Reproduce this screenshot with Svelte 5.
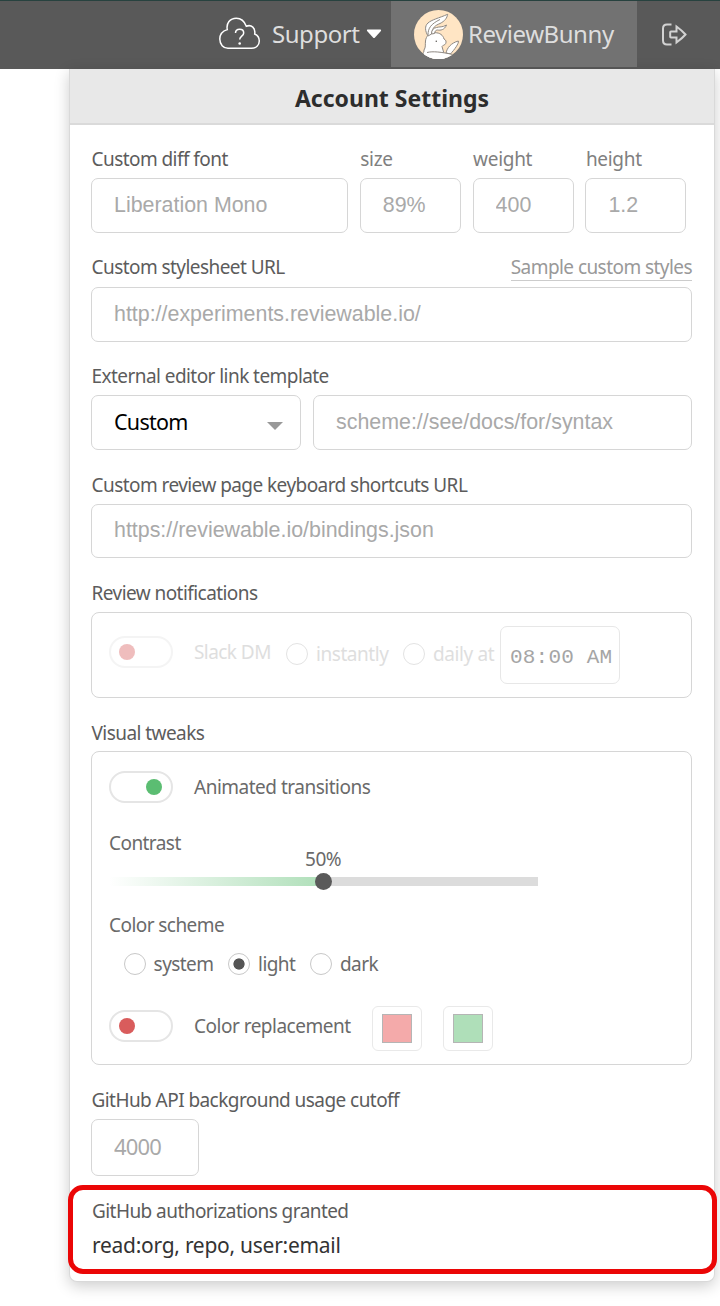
<script>
  let scheme = "light";
  let contrast = 50;
  const diffFields = [
    { name: "size", value: "89%" },
    { name: "weight", value: "400" },
    { name: "height", value: "1.2" },
  ];
  const schemes = ["system", "light", "dark"];
</script>

<div class="page">
  <header>
    <div class="support">
      <svg class="cloud" width="44" height="36" viewBox="0 0 44 36">
        <path
          d="M10 32.300h23.500c4.500 0 7.800-3 7.800-7.300 0-3.400-1.700-5.800-4.600-7 1-6-3.200-9.800-8.400-7.800C26.500 5.400 22.700 2.200 18.300 2.200c-6.300 0-10.300 5-9 11.400C4.500 15 1.800 18.600 1.800 23c0 5.300 3.500 9.300 8.200 9.300z"
        />
        <path d="M17.500 17c0-2.600 1.900-3.800 4.200-3.800s4 1.500 4 3.700c0 3.300-4 3.200-4 6.600" />
        <circle cx="21.700" cy="27.500" r="1.300" />
      </svg>
      <span class="nav-text">Support</span>
      <svg class="caret" width="16" height="10" viewBox="0 0 16 10">
        <path d="M1.500 .5h13q1 .3.400 1.500L9 8.500q-1 1-2 0L1.100 2Q.5 .8 1.500 .5z" />
      </svg>
    </div>
    <div class="user">
      <svg class="avatar" width="49" height="49" viewBox="0 0 49 49">
        <defs>
          <clipPath id="avatar-clip"><circle cx="24.500" cy="24.500" r="24.500" /></clipPath>
        </defs>
        <g clip-path="url(#avatar-clip)">
          <rect width="49" height="49" fill="#ffe5c4" />
          <g fill="#fff" stroke="#8e8882" stroke-width="1" stroke-linejoin="round">
            <path d="M32 43c1-5 5-10 12.300-12 1 2-4 9-8 13z" />
            <path d="M9 50l1-10c2-3 1-5 1.500-9 .5-5 4-8.300 9.500-8.300 5 0 8 2.500 9 6.300 2 1 2.500 2.500 1.700 4.500-1 2-3 1.500-3.700 3l4 14z" />
            <path d="M14 26c-3-5-3.500-10 0-13 3-3 11-5 19.700-8.700C33 8 31 11 26 13.500c-5 2-7.500 4-8.500 10.500z" />
            <path d="M17.500 24c0-4 2-6 5-6.500 3-1 6 0 10-2.500-2 5-6 5.500-9 5-2 0-3 2-3 3.500z" />
            <path d="M14 25c0-7 3-11 12-15.500" fill="none" />
            <path d="M10 42c7 1 14-1 21 1l8 2-4 6H8z" stroke="none" />
            <path d="M13 42.500c6-1.500 14-.5 26 2" fill="none" />
          </g>
          <circle cx="22.300" cy="31.300" r=".8" fill="#5d5a57" />
        </g>
      </svg>
      <span class="nav-text">ReviewBunny</span>
    </div>
    <div class="logout">
      <svg width="27" height="23" viewBox="0 0 27 23">
        <path d="M10.500 1.500H6Q2 1.500 2 5.500v12q0 4 4 4h4.500" />
        <path d="M10 8.500h5.500v-5q6 4.500 9 8-3 3.500-9 8v-5H10q-.8 0-.8-.8V9.300q0-.8.800-.8z" />
      </svg>
    </div>
  </header>

  <main class="panel">
    <h2>Account Settings</h2>
    <div class="settings">
      <div class="diff-row">
        <label class="diff-font">
          <span class="label">Custom diff font</span>
          <input type="text" placeholder="Liberation Mono" />
        </label>
        {#each diffFields as field}
          <label class="diff-small">
            <span class="label muted">{field.name}</span>
            <input type="text" placeholder={field.value} />
          </label>
        {/each}
      </div>

      <div class="field stylesheet">
        <div class="label-row">
          <label class="label" for="stylesheet">Custom stylesheet URL</label>
          <a href="#samples">Sample custom styles</a>
        </div>
        <input id="stylesheet" type="text" placeholder="http://experiments.reviewable.io/" />
      </div>

      <div class="field editor">
        <label class="label" for="editor">External editor link template</label>
        <div class="editor-row">
          <button class="select">
            Custom
            <svg width="16" height="8" viewBox="0 0 16 8"><path d="M0 0h16L8 8z" /></svg>
          </button>
          <input id="editor" type="text" placeholder="scheme://see/docs/for/syntax" />
        </div>
      </div>

      <div class="field shortcuts">
        <label class="label" for="shortcuts">Custom review page keyboard shortcuts URL</label>
        <input id="shortcuts" type="text" placeholder="https://reviewable.io/bindings.json" />
      </div>

      <div class="field">
        <span class="label">Review notifications</span>
        <div class="box notifications">
          <span class="toggle"></span>
          <span class="slack">Slack DM</span>
          <span class="radio"></span>
          <span class="instantly">instantly</span>
          <span class="radio"></span>
          <span class="daily">daily at</span>
          <span class="time">08:00 AM</span>
        </div>
      </div>

      <div class="field visual">
        <span class="label">Visual tweaks</span>
        <div class="box tweaks">
          <div class="tweak animated">
            <span class="toggle on"></span>
            <span class="tweak-label">Animated transitions</span>
          </div>
          <div class="contrast">
            <span class="tweak-label">Contrast</span>
            <div class="slider">
              <div class="fill" style="width: {contrast}%"></div>
              <div class="knob" style="left: {contrast}%">
                <span>{contrast}%</span>
              </div>
            </div>
          </div>
          <div class="scheme">
            <span class="tweak-label">Color scheme</span>
            <div class="schemes">
              {#each schemes as name}
                <button class="scheme-option" on:click={() => (scheme = name)}>
                  <span class="radio" class:checked={scheme === name}></span>
                  {name}
                </button>
              {/each}
            </div>
          </div>
          <div class="tweak replacement">
            <span class="toggle"></span>
            <span class="tweak-label">Color replacement</span>
            <span class="swatch removed"><i></i></span>
            <span class="swatch added"><i></i></span>
          </div>
        </div>
      </div>

      <div class="field">
        <label class="label" for="cutoff">GitHub API background usage cutoff</label>
        <input id="cutoff" class="cutoff" type="text" placeholder="4000" />
      </div>
    </div>

    <section class="authorizations">
      <div class="auth-title">GitHub authorizations granted</div>
      <div class="auth-list">read:org, repo, user:email</div>
    </section>
  </main>
</div>

<style>
  :global(body) {
    background: #fff;
    overflow: hidden;
  }

  .page,
  .page * {
    box-sizing: border-box;
  }

  .page {
    width: 720px;
    height: 1306px;
    overflow: hidden;
    font-family: "Noto Sans", "Open Sans", sans-serif;
    font-size: 19px;
    letter-spacing: -0.56px;
    color: #5c5c5c;
    white-space: nowrap;
  }

  header {
    display: flex;
    height: 69px;
    background: #595959;
    border-top: 1px solid #27423f;
  }

  .support {
    display: flex;
    align-items: center;
    width: 391px;
    height: 66px;
    padding-left: 218px;
  }

  .cloud {
    fill: none;
    stroke: #fff;
    stroke-width: 1.5;
    margin-right: 10px;
  }

  .cloud circle {
    fill: #fff;
    stroke: none;
  }

  .caret {
    fill: #fff;
    margin-left: 7px;
  }

  .nav-text {
    margin-top: -2px;
    font-size: 24px;
    letter-spacing: -0.45px;
    color: #dedede;
  }

  .user {
    display: flex;
    align-items: center;
    width: 246px;
    height: 66px;
    padding-left: 23px;
    background: #727272;
  }

  .avatar {
    margin-right: 5px;
  }

  .logout {
    display: flex;
    align-items: center;
    height: 66px;
    padding-left: 24px;
  }

  .logout svg {
    fill: none;
    stroke: #d2d2d2;
    stroke-width: 2;
  }

  .panel {
    width: 646px;
    height: 1213px;
    margin-left: 69px;
    background: #fff;
    border: 1px solid #d9d9d9;
    border-top: 0;
    border-radius: 0 0 8px 8px;
    box-shadow: 0 4px 15px rgba(0, 0, 0, 0.2);
  }

  h2 {
    margin: 0;
    height: 56px;
    line-height: 59px;
    text-align: center;
    font-size: 23px;
    letter-spacing: 0;
    color: #2d2d2d;
    background: #e8e8e8;
    border-bottom: 2px solid #dadada;
  }

  .settings {
    padding: 15px 22px 0 21px;
  }

  .label {
    display: block;
    height: 38px;
    padding-left: 0.5px;
    line-height: 38px;
  }

  .stylesheet .label {
    line-height: 37px;
  }

  .visual > .label {
    line-height: 40px;
  }

  .muted {
    color: #808080;
    letter-spacing: -0.3px;
  }

  input {
    display: block;
    width: 100%;
    height: 55px;
    padding: 0 22px;
    border: 1px solid #d6d6d6;
    border-radius: 7px;
    background: #fff;
    font-family: "Liberation Sans", Arial, sans-serif;
    font-size: 21.4px;
  }

  input::placeholder {
    color: #a9a9a9;
    opacity: 1;
  }

  .diff-row {
    display: flex;
    gap: 11.8px;
  }

  .diff-font {
    width: 257px;
  }

  .diff-small {
    width: 101px;
  }

  .field {
    margin-top: 16px;
  }

  .editor,
  .visual {
    margin-top: 15px;
  }

  .label-row {
    display: flex;
    justify-content: space-between;
  }

  a {
    height: 32px;
    line-height: 37px;
    color: #999;
    text-decoration: none;
    border-bottom: 1px solid #ccc;
  }

  .editor-row {
    display: flex;
    gap: 12px;
  }

  button {
    font-family: inherit;
    letter-spacing: inherit;
    padding: 0;
    border: 0;
    background: none;
  }

  .select {
    display: flex;
    flex: none;
    align-items: center;
    justify-content: space-between;
    width: 210px;
    height: 55px;
    padding: 0 17px 3px 22px;
    border: 1px solid #d6d6d6;
    border-radius: 7px;
    font-size: 21.5px;
    letter-spacing: -0.75px;
    color: #000;
  }

  .select svg {
    fill: #999;
    margin-top: 10px;
  }

  .shortcuts input {
    height: 54px;
    padding-bottom: 1px;
  }

  .box {
    border: 1px solid #d6d6d6;
    border-radius: 8px;
  }

  .notifications {
    display: flex;
    height: 86px;
    padding: 13px 17px;
    line-height: 52px;
    color: #dedede;
  }

  .toggle {
    flex: none;
    width: 64px;
    height: 32px;
    border: 2px solid #e5e5e5;
    border-radius: 16px;
    padding: 6px 8px;
  }

  .toggle::before {
    content: "";
    display: block;
    width: 16px;
    height: 16px;
    border-radius: 50%;
    background: #d95c5c;
  }

  .toggle.on::before {
    margin-left: 27px;
    background: #5bbd72;
  }

  .notifications .toggle {
    margin-top: 10px;
    opacity: 0.4;
  }

  .radio {
    flex: none;
    width: 22px;
    height: 22px;
    border: 1.5px solid #c8c8c8;
    border-radius: 50%;
  }

  .radio.checked {
    background: radial-gradient(circle, #555 5.2px, transparent 6px);
  }

  .notifications .radio {
    margin-top: 17px;
    border-color: #e3e3e3;
  }

  .slack {
    width: 92px;
    margin-left: 21px;
  }

  .instantly {
    width: 87px;
    margin-left: 8px;
    line-height: 57px;
    letter-spacing: -0.45px;
  }

  .daily {
    width: 67px;
    margin-left: 8px;
    line-height: 57px;
    letter-spacing: -0.4px;
  }

  .time {
    width: 120px;
    height: 58px;
    padding-left: 9px;
    line-height: 61px;
    border: 1px solid #e7e7e7;
    border-radius: 7px;
    font-family: "Liberation Mono", monospace;
    font-size: 21px;
    letter-spacing: 0.2px;
    color: #a5a5a5;
  }

  .tweaks {
    height: 314px;
    padding: 19px 17px 0;
    color: #6a6a6a;
  }

  .tweak {
    display: flex;
    align-items: center;
    height: 32px;
  }

  .tweak .tweak-label {
    margin-left: 21px;
    letter-spacing: -0.5px;
  }

  .contrast {
    height: 82px;
    margin-top: 25px;
  }

  .contrast .tweak-label,
  .scheme .tweak-label {
    display: block;
    height: 30px;
    line-height: 30px;
  }

  .slider {
    position: relative;
    width: 429px;
    height: 9px;
    margin-top: 19px;
    background: #dcdcdc;
  }

  .fill {
    height: 9px;
    background: linear-gradient(to right, #fff, #afdfb9);
  }

  .knob {
    position: absolute;
    top: -4px;
    width: 17px;
    height: 17px;
    margin-left: -9px;
    border-radius: 50%;
    background: #5a5a5a;
  }

  .knob span {
    position: absolute;
    left: 50%;
    top: -29px;
    line-height: 30px;
    transform: translateX(-50%);
  }

  .scheme {
    height: 100px;
  }

  .schemes {
    display: flex;
    gap: 15px;
    height: 30px;
    margin-top: 9px;
    padding-left: 15px;
  }

  .scheme-option {
    display: flex;
    align-items: center;
    gap: 7.6px;
    font-size: 19px;
    color: inherit;
  }

  .swatch {
    width: 50px;
    height: 45px;
    padding: 7px 9px;
    margin-top: 4px;
    margin-left: 21px;
    border: 1px solid #e9e9e9;
    border-radius: 6px;
  }

  .swatch i {
    display: block;
    width: 30px;
    height: 29px;
    border: 1px solid #b5b5b5;
  }

  .removed i {
    background: #f4aaaa;
  }

  .added i {
    background: #afdfb9;
  }

  .cutoff {
    width: 108px;
    height: 57px;
    padding-bottom: 3px;
    font-family: inherit;
    font-size: 22px;
    letter-spacing: -0.8px;
  }

  .authorizations {
    width: 649px;
    height: 89px;
    margin: 9px 0 0 -2px;
    padding: 4px 19px;
    border: 5px solid #eb0606;
    border-radius: 15px;
    background: #fff;
  }

  .auth-title {
    line-height: 34px;
  }

  .auth-list {
    line-height: 35px;
    font-size: 21px;
    letter-spacing: -0.27px;
    color: #333;
  }
</style>
